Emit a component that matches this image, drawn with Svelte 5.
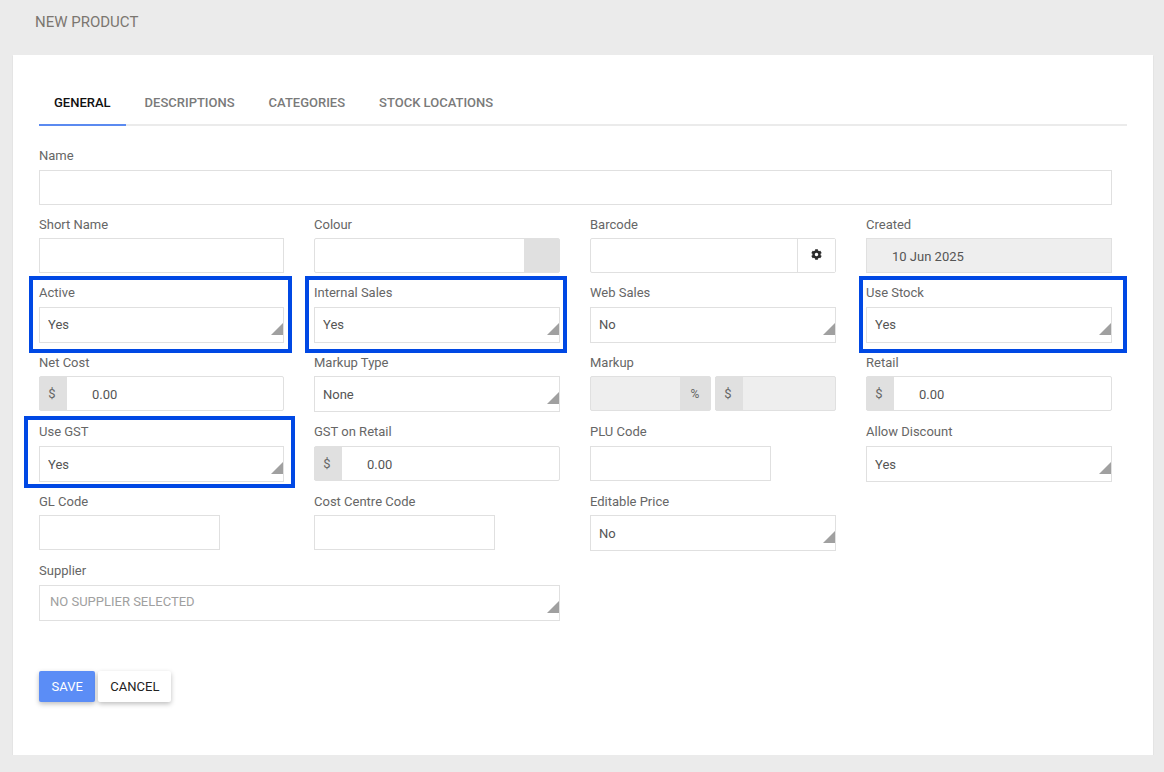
<script>
  const tabs = ['General', 'Descriptions', 'Categories', 'Stock Locations'];
</script>

{#snippet pick(value)}
  <div class="pick">
    <select class="sel">
      <option>{value}</option>
    </select>
  </div>
{/snippet}

{#snippet money(value)}
  <div class="group">
    <span class="addon left">$</span>
    <input class="bare money-in" {value} />
  </div>
{/snippet}

<header class="title">New Product</header>

<main class="card">
  <nav class="tabs">
    {#each tabs as tab, i}
      <button class="tab" class:active={i === 0}>{tab}</button>
    {/each}
  </nav>

  <form class="form">
    <div class="row">
      <div class="field wide-4">
        <label for="name">Name</label>
        <input id="name" class="text" />
      </div>
    </div>

    <div class="row">
      <div class="field"><label for="sn">Short Name</label><input id="sn" class="text" /></div>
      <div class="field">
        <label for="col">Colour</label>
        <div class="group"><input id="col" class="bare" /><span class="swatch"></span></div>
      </div>
      <div class="field">
        <label for="bc">Barcode</label>
        <div class="group">
          <input id="bc" class="bare" />
          <button type="button" class="gear" aria-label="Generate barcode">
            <svg viewBox="0 0 512 512" width="11" height="11" aria-hidden="true"><path fill="#2b2b2b" d="M487.4 315.7l-42.6-24.6c4.3-23.2 4.3-47 0-70.2l42.6-24.6c4.9-2.8 7.1-8.6 5.5-14-11.1-35.6-30-67.8-54.7-94.6-3.8-4.1-10-5.1-14.8-2.3L380.8 110c-17.9-15.4-38.5-27.3-60.8-35.1V25.8c0-5.6-3.9-10.5-9.4-11.7-36.7-8.2-74.3-7.8-109.2 0-5.5 1.2-9.4 6.1-9.4 11.7V75c-22.2 7.9-42.8 19.8-60.8 35.1L88.7 85.5c-4.9-2.8-11-1.9-14.8 2.3-24.7 26.7-43.6 58.9-54.7 94.6-1.7 5.4.6 11.2 5.5 14L67.3 221c-4.3 23.2-4.3 47 0 70.2l-42.6 24.6c-4.9 2.8-7.1 8.6-5.5 14 11.1 35.6 30 67.8 54.7 94.6 3.8 4.1 10 5.1 14.8 2.3l42.6-24.6c17.9 15.4 38.5 27.3 60.8 35.1v49.2c0 5.6 3.9 10.5 9.4 11.7 36.7 8.2 74.3 7.8 109.2 0 5.5-1.2 9.4-6.1 9.4-11.7v-49.2c22.2-7.9 42.8-19.8 60.8-35.1l42.6 24.6c4.9 2.8 11 1.9 14.8-2.3 24.7-26.7 43.6-58.9 54.7-94.6 1.5-5.5-.7-11.3-5.6-14.1zM256 336c-44.1 0-80-35.9-80-80s35.9-80 80-80 80 35.9 80 80-35.9 80-80 80z"/></svg>
          </button>
        </div>
      </div>
      <div class="field">
        <label for="cr">Created</label>
        <input id="cr" class="text readonly" value="10 Jun 2025" readonly />
      </div>
    </div>

    <div class="row">
      <div class="field"><span class="lbl">Active</span>{@render pick('Yes')}</div>
      <div class="field"><span class="lbl">Internal Sales</span>{@render pick('Yes')}</div>
      <div class="field"><span class="lbl">Web Sales</span>{@render pick('No')}</div>
      <div class="field"><span class="lbl">Use Stock</span>{@render pick('Yes')}</div>
    </div>

    <div class="row">
      <div class="field"><span class="lbl">Net Cost</span>{@render money('0.00')}</div>
      <div class="field"><span class="lbl">Markup Type</span>{@render pick('None')}</div>
      <div class="field">
        <span class="lbl">Markup</span>
        <div class="split">
          <div class="group off">
            <input class="bare" readonly />
            <span class="addon right">%</span>
          </div>
          <div class="group off">
            <span class="addon left">$</span>
            <input class="bare" readonly />
          </div>
        </div>
      </div>
      <div class="field"><span class="lbl">Retail</span>{@render money('0.00')}</div>
    </div>

    <div class="row">
      <div class="field"><span class="lbl">Use GST</span>{@render pick('Yes')}</div>
      <div class="field"><span class="lbl">GST on Retail</span>{@render money('0.00')}</div>
      <div class="field"><label for="plu">PLU Code</label><input id="plu" class="text short" /></div>
      <div class="field"><span class="lbl">Allow Discount</span>{@render pick('Yes')}</div>
    </div>

    <div class="row">
      <div class="field"><label for="gl">GL Code</label><input id="gl" class="text short" /></div>
      <div class="field"><label for="cc">Cost Centre Code</label><input id="cc" class="text short" /></div>
      <div class="field"><span class="lbl">Editable Price</span>{@render pick('No')}</div>
    </div>

    <div class="row">
      <div class="field wide-2">
        <span class="lbl">Supplier</span>
        <div class="pick supplier">
          <select class="sel"><option>NO SUPPLIER SELECTED</option></select>
        </div>
      </div>
    </div>
  </form>

  <div class="actions">
    <button class="btn save">Save</button>
    <button class="btn cancel">Cancel</button>
  </div>

  <span class="mark m-active"></span>
  <span class="mark m-internal"></span>
  <span class="mark m-stock"></span>
  <span class="mark m-gst"></span>
</main>

<style>
  :global(body) {
    background: #ebebeb;
    font-family: Roboto, "Liberation Sans", sans-serif;
    font-size: 13px;
    color: #555;
  }
  .title {
    height: 55px;
    box-sizing: border-box;
    padding: 13px 0 0 35px;
    font-size: 15px;
    line-height: 18px;
    text-transform: uppercase;
    color: #7b7670;
  }
  .card {
    position: relative;
    box-sizing: border-box;
    width: 1140px;
    height: 700px;
    margin-left: 13px;
    padding: 31px 0 0 26px;
    background: #fff;
    box-shadow: 0 1px 1px rgba(0, 0, 0, 0.16);
  }
  .tabs {
    display: flex;
    gap: 4px;
    width: 1088px;
    height: 40px;
    box-sizing: border-box;
    border-bottom: 2px solid #ebebeb;
  }
  .tab {
    height: 40px;
    padding: 0 15px 6px;
    border: 0;
    border-bottom: 2px solid transparent;
    background: none;
    font: 500 13px Roboto, sans-serif;
    text-transform: uppercase;
    color: #7a7a7a;
  }
  .tab.active {
    color: #111;
    border-bottom-color: #5b8af0;
  }
  .form {
    margin-top: 22px;
  }
  .row {
    display: grid;
    grid-template-columns: 275px 276px 276px 276px;
    height: 69px;
  }
  .row:nth-child(1) { height: 68px; }
  .row:nth-child(4),
  .row:nth-child(6) { height: 70px; }
  .row:nth-child(7) { height: 58px; }
  .field {
    padding-right: 30px;
    min-width: 0;
  }
  .wide-4 { grid-column: span 4; }
  .wide-2 { grid-column: span 2; }
  label, .lbl {
    display: block;
    height: 15px;
    line-height: 15px;
    padding-bottom: 7px;
    font-size: 13px;
    color: #666;
  }
  .row:nth-child(even) label,
  .row:nth-child(even) .lbl {
    padding-top: 1px;
    height: 14px;
  }
  input {
    font: 13px Roboto, sans-serif;
    color: #555;
    outline: none;
  }
  .text {
    display: block;
    box-sizing: border-box;
    width: 100%;
    height: 35px;
    padding: 0 8px;
    border: 1px solid #e0e0e0;
    background: #fff;
  }
  .text.short { width: 181px; }
  .text.readonly {
    background: #eee;
    padding: 2px 25px 0;
  }
  .group {
    display: flex;
    flex: 1;
    min-width: 0;
    box-sizing: border-box;
    height: 35px;
    border: 1px solid #e0e0e0;
    border-radius: 2px;
    background: #fff;
  }
  .bare {
    flex: 1;
    min-width: 0;
    height: 100%;
    box-sizing: border-box;
    padding: 0;
    border: 0;
    background: transparent;
  }
  .money-in { padding: 2px 0 0 25px; }
  .swatch {
    width: 35px;
    background: #e0e0e0;
  }
  .gear {
    display: flex;
    align-items: center;
    justify-content: center;
    width: 38px;
    padding: 0 0 3px;
    border: 0;
    border-left: 1px solid #e0e0e0;
    background: #fff;
  }
  .addon {
    display: flex;
    align-items: center;
    justify-content: center;
    background: #e0e0e0;
    color: #666;
    font-size: 13px;
  }
  .addon.left {
    box-sizing: border-box;
    width: 28px;
    margin-left: -1px;
    padding-right: 2px;
  }
  .addon.right { width: 30px; font-size: 12px; }
  .split {
    display: flex;
    gap: 4px;
  }
  .off { background: #eee; }
  .pick {
    position: relative;
  }
  .pick::after {
    content: "";
    position: absolute;
    right: 1px;
    bottom: 8px;
    width: 12px;
    height: 12px;
    background: #a0a0a0;
    clip-path: polygon(100% 0, 100% 100%, 0 100%);
    pointer-events: none;
  }
  .sel {
    display: block;
    box-sizing: border-box;
    width: 100%;
    height: 36px;
    padding: 0 8px;
    border: 1px solid #e0e0e0;
    border-radius: 0;
    background: #fff;
    appearance: none;
    font: 13px Roboto, sans-serif;
    color: #555;
    outline: none;
  }
  .row:nth-child(3) .sel { padding-bottom: 1px; }
  .supplier .sel {
    padding: 0 10px 3px;
    font-size: 13px;
    color: #a0a0a0;
  }
  .actions {
    display: flex;
    gap: 3px;
    margin-top: 50px;
  }
  .btn {
    height: 31px;
    padding: 0 12px;
    border: 0;
    border-radius: 2px;
    font: 400 13px Roboto, sans-serif;
    text-transform: uppercase;
    box-shadow: 0 2px 5px rgba(0, 0, 0, 0.26);
  }
  .save { background: #5b8df6; color: #fff; padding: 0 12.5px; }
  .cancel { background: #fff; color: #222; }
  .mark {
    position: absolute;
    box-sizing: border-box;
    border: 4px solid #0048e4;
    pointer-events: none;
  }
  .m-active { left: 16px; top: 221px; width: 263px; height: 77px; }
  .m-internal { left: 292px; top: 221px; width: 262px; height: 77px; }
  .m-stock { left: 846px; top: 221px; width: 268px; height: 77px; }
  .m-gst { left: 11px; top: 361px; width: 271px; height: 72px; }
</style>
